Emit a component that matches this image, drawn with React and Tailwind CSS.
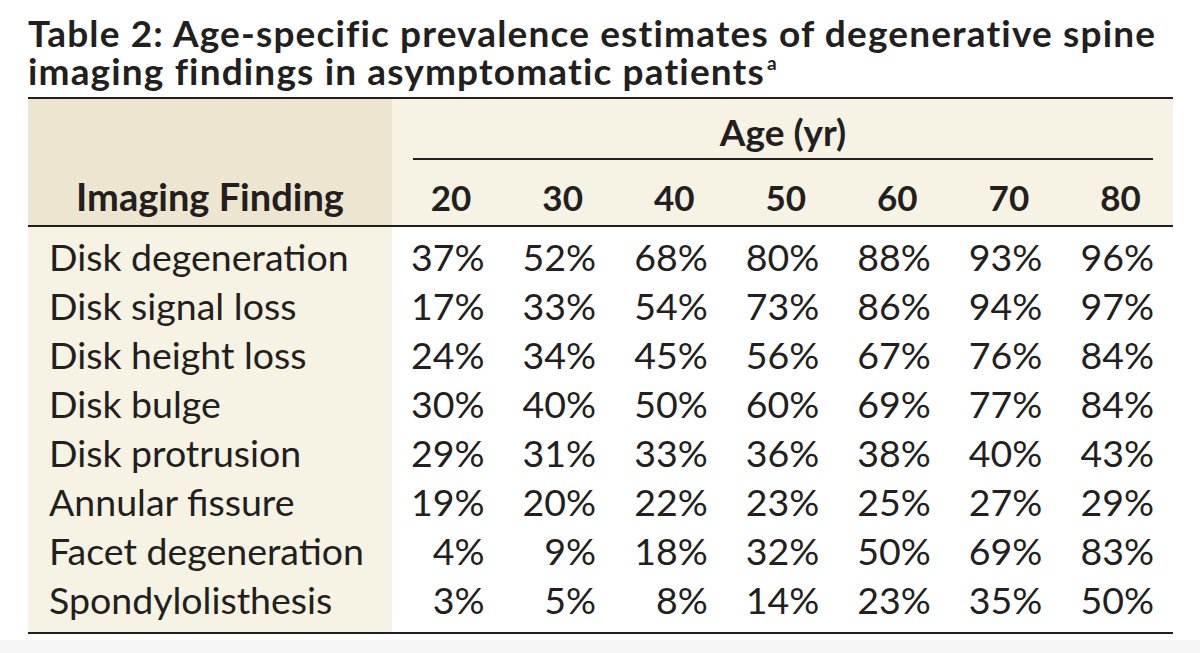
import React from "react";

const ages = ["20", "30", "40", "50", "60", "70", "80"];

const rows = [
  ["Disk degeneration", ["37%", "52%", "68%", "80%", "88%", "93%", "96%"]],
  ["Disk signal loss", ["17%", "33%", "54%", "73%", "86%", "94%", "97%"]],
  ["Disk height loss", ["24%", "34%", "45%", "56%", "67%", "76%", "84%"]],
  ["Disk bulge", ["30%", "40%", "50%", "60%", "69%", "77%", "84%"]],
  ["Disk protrusion", ["29%", "31%", "33%", "36%", "38%", "40%", "43%"]],
  ["Annular fissure", ["19%", "20%", "22%", "23%", "25%", "27%", "29%"]],
  ["Facet degeneration", ["4%", "9%", "18%", "32%", "50%", "69%", "83%"]],
  ["Spondylolisthesis", ["3%", "5%", "8%", "14%", "23%", "35%", "50%"]],
];

function App() {
  return (
    <div className="w-[1200px] h-[653px] overflow-hidden bg-white text-[#231f20] font-[Lato,sans-serif]">
      <div className="ml-[28px] w-[1145px]">
        {/* caption */}
        <h1 className="pt-[14px] pb-[7px] text-[37px] font-bold tracking-[1.15px] whitespace-nowrap">
          <div className="h-[38px] leading-[38px]">Table 2: Age-specific prevalence estimates of degenerative spine</div>
          <div className="h-[38px] leading-[38px]">
            imaging findings in asymptomatic patients
            <span className="inline-block align-top text-[19px] leading-[19px] font-bold ml-[2px] mt-[1px]">a</span>
          </div>
        </h1>

        <div className="border-t-2 border-b-2 border-[#231f20]">
          {/* header */}
          <div className="grid grid-cols-[364px_1fr] h-[126px]">
            <div className="bg-[#ece5cf] flex items-end justify-center pb-[9px]">
              <span className="text-[38px] leading-[40px] font-bold">Imaging Finding</span>
            </div>
            <div className="bg-[#f6f2e4] flex flex-col">
              <div className="ml-[21px] mr-[20px] pt-[13px] pb-[6px] border-b-2 border-[#231f20] text-center">
                <span className="text-[37px] leading-[40px] font-bold">Age (yr)</span>
              </div>
              <div className="grid grid-cols-7 pt-[17px]">
                {ages.map((a) => (
                  <div key={a} className="flex justify-end pr-[19px]">
                    <span className="w-[67px] text-center text-[35px] leading-[40px] font-bold">{a}</span>
                  </div>
                ))}
              </div>
            </div>
          </div>

          {/* body */}
          <div className="border-t-2 border-[#231f20] grid grid-cols-[364px_1fr]">
            <div className="bg-[#f6f2e4] pt-[5px] pb-[8px] pl-[21px]">
              {rows.map(([name]) => (
                <div key={name} className="h-[49px] text-[37.5px] leading-[49px] whitespace-nowrap">
                  {name}
                </div>
              ))}
            </div>
            <div className="pt-[5px] pb-[8px]">
              {rows.map(([name, vals]) => (
                <div key={name} className="grid grid-cols-7 h-[49px]">
                  {vals.map((v, i) => (
                    <div key={i} className="text-right pr-[19px] text-[37.5px] leading-[49px] tabular-nums">
                      {v}
                    </div>
                  ))}
                </div>
              ))}
            </div>
          </div>
        </div>
      </div>
      <div className="mt-[6px] h-[20px] bg-[#f5f5f5]" />
    </div>
  );
}

export default App;
